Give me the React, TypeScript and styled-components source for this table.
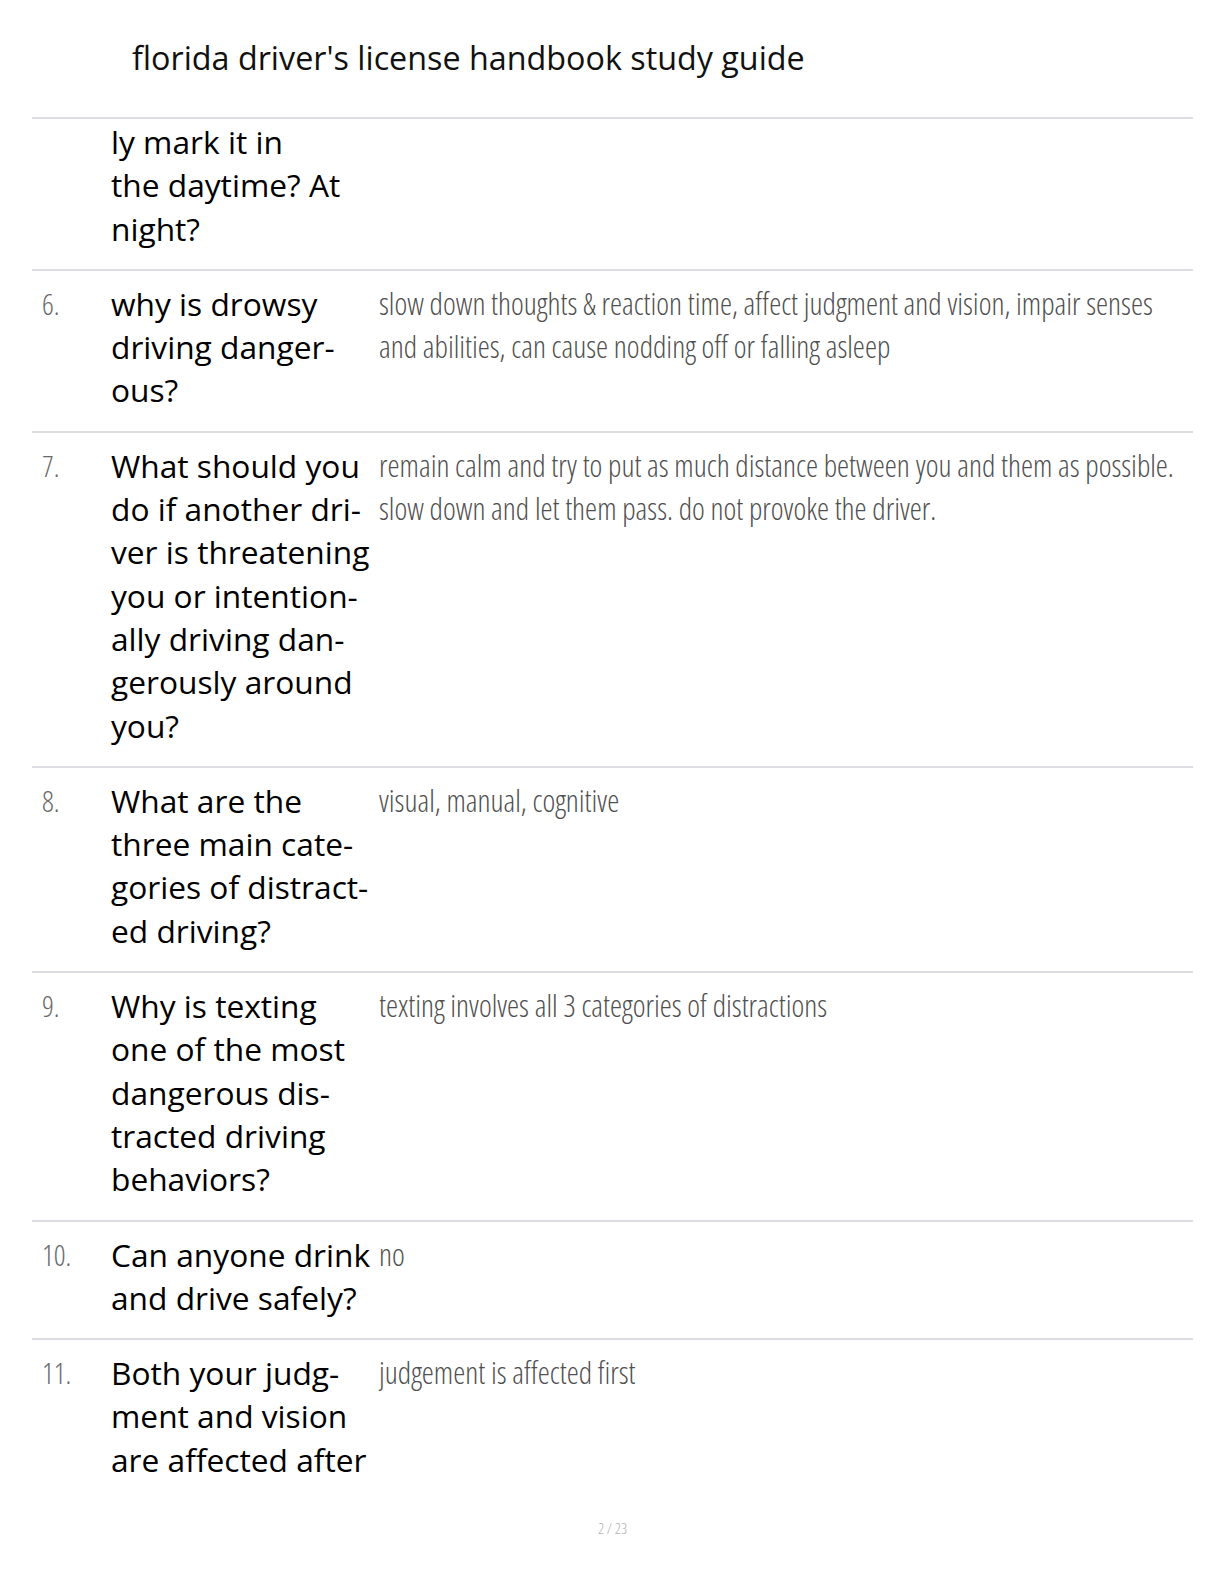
import { createGlobalStyle, styled } from 'styled-components';

type Card = {
  num?: string;
  question: string[];
  answer: string[];
};

const cards: Card[] = [
  { question: ['ly mark it in', 'the daytime? At', 'night?'], answer: [] },
  {
    num: '6.',
    question: ['why is drowsy', 'driving danger-', 'ous?'],
    answer: [
      'slow down thoughts & reaction time, affect judgment and vision, impair senses',
      'and abilities, can cause nodding off or falling asleep',
    ],
  },
  {
    num: '7.',
    question: [
      'What should you',
      'do if another dri-',
      'ver is threatening',
      'you or intention-',
      'ally driving dan-',
      'gerously around',
      'you?',
    ],
    answer: [
      'remain calm and try to put as much distance between you and them as possible.',
      'slow down and let them pass. do not provoke the driver.',
    ],
  },
  {
    num: '8.',
    question: ['What are the', 'three main cate-', 'gories of distract-', 'ed driving?'],
    answer: ['visual, manual, cognitive'],
  },
  {
    num: '9.',
    question: ['Why is texting', 'one of the most', 'dangerous dis-', 'tracted driving', 'behaviors?'],
    answer: ['texting involves all 3 categories of distractions'],
  },
  {
    num: '10.',
    question: ['Can anyone drink', 'and drive safely?'],
    answer: ['no'],
  },
  {
    num: '11.',
    question: ['Both your judg-', 'ment and vision', 'are affected after'],
    answer: ['judgement is affected first'],
  },
];

const GlobalStyle = createGlobalStyle`
  html, body {
    margin: 0;
    padding: 0;
    background: #ffffff;
  }
  body {
    font-family: 'Open Sans', 'Noto Sans', sans-serif;
  }
`;

const App = () => {
  return (
    <Page>
      <GlobalStyle />
      <Title>florida driver's license handbook study guide</Title>
      <Table>
        {cards.map((c, i) => (
          <Row key={i} $first={i === 0} $last={i === cards.length - 1}>
            <Num>{c.num}</Num>
            <Question>
              {c.question.map((l, j) => (
                <Line key={j}>{l}</Line>
              ))}
            </Question>
            <Answer>
              {c.answer.map((l, j) => (
                <Line key={j}>{l}</Line>
              ))}
            </Answer>
          </Row>
        ))}
      </Table>
      <PageNum>2 / 23</PageNum>
    </Page>
  );
};

export default App;

const Page = styled.div`
  width: 1224px;
  height: 1584px;
  box-sizing: border-box;
  padding: 35px 31px 0 32px;
  display: flex;
  flex-direction: column;
  overflow: hidden;
`;

const Title = styled.h1`
  margin: 0 0 38px 100px;
  font-family: 'Open Sans', sans-serif;
  font-size: 32.3px;
  font-weight: 400;
  line-height: 44px;
  color: #111111;
`;

const Table = styled.div`
  display: flex;
  flex-direction: column;
  border-top: 2px solid #dcdce2;
`;

const Row = styled.div<{ $first?: boolean; $last?: boolean }>`
  display: grid;
  grid-template-columns: 69px 268px 1fr;
  padding: ${(p) => (p.$first ? '1px' : '11px')} 0 ${(p) => (p.$last ? '0' : '19px')} 10px;
  border-bottom: ${(p) => (p.$last ? 'none' : '2px solid #dcdce2')};
`;

const Line = styled.div`
  white-space: nowrap;
`;

const Num = styled.div`
  font-family: 'Open Sans', sans-serif;
  font-size: 29px;
  font-weight: 300;
  font-stretch: 75%;
  line-height: 43.3px;
  color: #6a6a6a;
`;

const Question = styled.div`
  font-family: 'Open Sans', sans-serif;
  font-size: 31.7px;
  font-weight: 400;
  line-height: 43.3px;
  color: #000000;
`;

const Answer = styled.div`
  font-family: 'Open Sans', sans-serif;
  font-size: 30.5px;
  font-weight: 300;
  font-stretch: 75%;
  line-height: 43.3px;
  color: #505050;
`;

const PageNum = styled.div`
  margin-top: auto;
  margin-bottom: 46px;
  text-align: center;
  font-family: 'Open Sans', sans-serif;
  font-size: 15px;
  font-weight: 300;
  font-stretch: 75%;
  color: #b0b0b0;
`;
